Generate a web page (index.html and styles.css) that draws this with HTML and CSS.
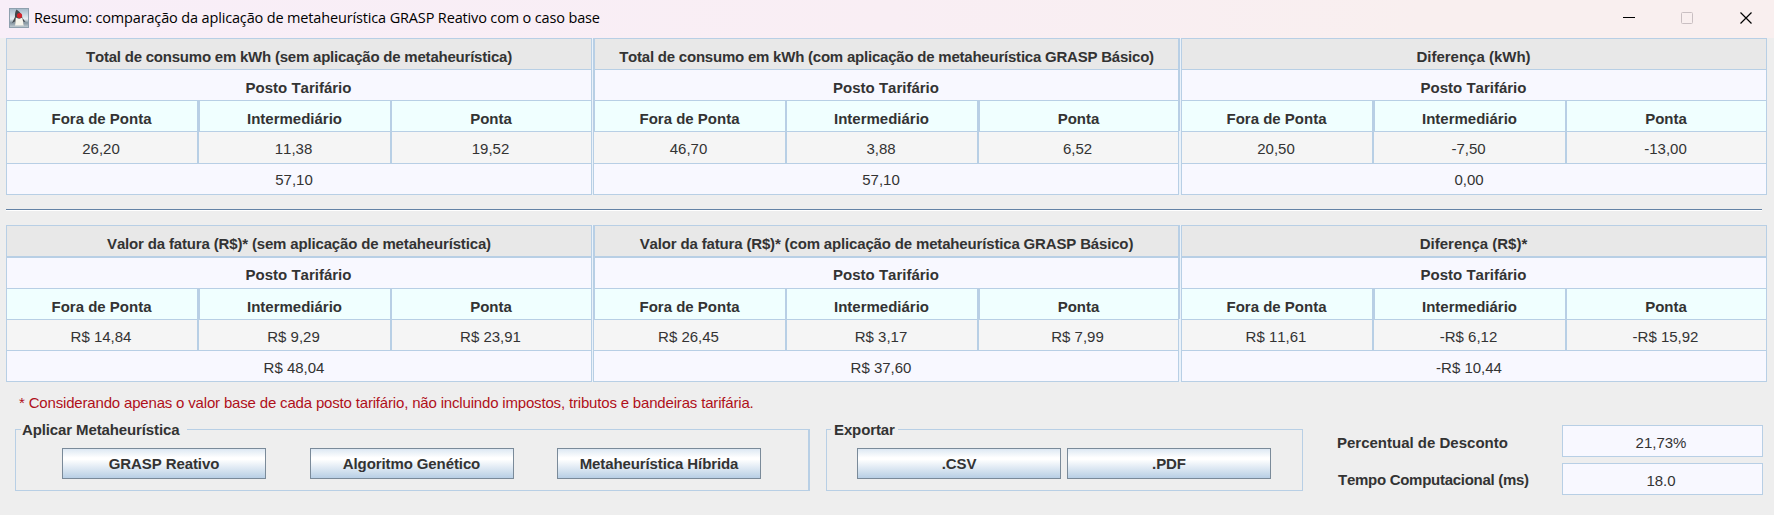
FILE: index.html
```
<!DOCTYPE html>
<html lang="pt-BR">
<head>
<meta charset="utf-8">
<title>Resumo</title>
<link rel="stylesheet" href="styles.css">
</head>
<body>
<header class="titlebar">
  <svg class="app-icon" width="20" height="20" viewBox="0 0 20 20">
    <defs><linearGradient id="sky" x1="0" y1="0" x2="0" y2="1"><stop offset="0" stop-color="#a3b8c8"/><stop offset=".55" stop-color="#e9eff3"/><stop offset=".75" stop-color="#8595a0"/><stop offset="1" stop-color="#c6d0d6"/></linearGradient></defs>
    <rect x=".5" y=".5" width="19" height="19" fill="url(#sky)" stroke="#8fa0ae"/>
    <path d="M7.500 1.500C10 3 13 6 13.500 10L16.500 14L14 13.500L14.500 17H6L6 13.500L3 15L6 9C5.800 6 6.200 3 7.500 1.500Z" fill="#42474c"/>
    <path d="M6.800 9.500C9 11 11.500 11 13.300 9.500L14.800 17.500H6Z" fill="#f7f5ec"/>
    <circle cx="10.500" cy="7.500" r="2.600" fill="#d3222a"/>
  </svg>
  <span class="window-title">Resumo: comparação da aplicação de metaheurística GRASP Reativo com o caso base</span>
  <svg class="controls" width="130" height="14" viewBox="0 0 130 14">
    <path d="M0 6.500H12" stroke="#000" fill="none"/>
    <rect x="58.500" y="1.500" width="11" height="11" rx="1" stroke="#c9bfc2" fill="none"/>
    <path d="M117.500 1.500L128.500 12.500M128.500 1.500L117.500 12.500" stroke="#000" stroke-width="1.200" fill="none"/>
  </svg>
</header>
<main>
  <section class="tables">
    <div class="panel side">
      <div class="cell title tight">Total de consumo em kWh (sem aplicação de metaheurística)</div>
      <div class="cell posto">Posto Tarifário</div>
      <div class="cell head">Fora de Ponta</div><div class="cell head thick">Intermediário</div><div class="cell head mid">Ponta</div>
      <div class="cell value">26,20</div><div class="cell value mid">11,38</div><div class="cell value mid">19,52</div>
      <div class="cell total">57,10</div>
    </div>
    <div class="panel center">
      <div class="cell title tight">Total de consumo em kWh (com aplicação de metaheurística GRASP Básico)</div>
      <div class="cell posto">Posto Tarifário</div>
      <div class="cell head">Fora de Ponta</div><div class="cell head mid">Intermediário</div><div class="cell head thick">Ponta</div>
      <div class="cell value">46,70</div><div class="cell value mid">3,88</div><div class="cell value mid">6,52</div>
      <div class="cell total">57,10</div>
    </div>
    <div class="panel side">
      <div class="cell title">Diferença (kWh)</div>
      <div class="cell posto">Posto Tarifário</div>
      <div class="cell head">Fora de Ponta</div><div class="cell head thick">Intermediário</div><div class="cell head mid">Ponta</div>
      <div class="cell value">20,50</div><div class="cell value mid">-7,50</div><div class="cell value mid">-13,00</div>
      <div class="cell total">0,00</div>
    </div>
  </section>
  <hr class="separator">
  <section class="tables bill">
    <div class="panel side">
      <div class="cell title tight">Valor da fatura (R$)* (sem aplicação de metaheurística)</div>
      <div class="cell posto">Posto Tarifário</div>
      <div class="cell head">Fora de Ponta</div><div class="cell head thick">Intermediário</div><div class="cell head mid">Ponta</div>
      <div class="cell value">R$ 14,84</div><div class="cell value mid">R$ 9,29</div><div class="cell value mid">R$ 23,91</div>
      <div class="cell total">R$ 48,04</div>
    </div>
    <div class="panel center">
      <div class="cell title tight">Valor da fatura (R$)* (com aplicação de metaheurística GRASP Básico)</div>
      <div class="cell posto">Posto Tarifário</div>
      <div class="cell head">Fora de Ponta</div><div class="cell head mid">Intermediário</div><div class="cell head thick">Ponta</div>
      <div class="cell value">R$ 26,45</div><div class="cell value mid">R$ 3,17</div><div class="cell value mid">R$ 7,99</div>
      <div class="cell total">R$ 37,60</div>
    </div>
    <div class="panel side">
      <div class="cell title">Diferença (R$)*</div>
      <div class="cell posto">Posto Tarifário</div>
      <div class="cell head">Fora de Ponta</div><div class="cell head thick">Intermediário</div><div class="cell head mid">Ponta</div>
      <div class="cell value">R$ 11,61</div><div class="cell value mid">-R$ 6,12</div><div class="cell value mid">-R$ 15,92</div>
      <div class="cell total">-R$ 10,44</div>
    </div>
  </section>
  <p class="note">* Considerando apenas o valor base de cada posto tarifário, não incluindo impostos, tributos e bandeiras tarifária.</p>
  <section class="bottom">
    <fieldset class="group apply">
      <legend>Aplicar Metaheurística</legend>
      <button>GRASP Reativo</button><button>Algoritmo Genético</button><button>Metaheurística Híbrida</button>
    </fieldset>
    <fieldset class="group export">
      <legend>Exportar</legend>
      <button>.CSV</button><button>.PDF</button>
    </fieldset>
    <div class="results">
      <span class="label">Percentual de Desconto</span><output>21,73%</output>
      <span class="label time">Tempo Computacional (ms)</span><output>18.0</output>
    </div>
  </section>
</main>
</body>
</html>
```
FILE: styles.css
```
* { box-sizing: border-box; }
body {
  margin: 0;
  width: 1774px;
  height: 515px;
  overflow: hidden;
  background: #eeeeee;
  color: #333333;
  font: 15px/18px "Liberation Sans", Arial, sans-serif;
  font-kerning: none;
}
.titlebar {
  display: flex;
  height: 38px;
  padding-left: 9px;
  background: linear-gradient(90deg, #f8eef8, #f9eef4 50%, #f9efef 80%, #f9efef);
}
.app-icon { margin-top: 8px; }
.window-title {
  margin: 8px 0 0 5px;
  color: #000;
  font: 14.5px/20px "Open Sans", "Noto Sans", sans-serif;
  letter-spacing: -0.15px;
  white-space: nowrap;
}
.controls { margin: 11px 21px 0 auto; }
main { padding-left: 6px; }
.tables {
  display: grid;
  grid-template-columns: 586px 587px 586px;
  column-gap: 1px;
  width: 1761px;
  background: #eaf2fa;
}
.panel {
  display: grid;
  grid-template-rows: 31px 31px 31px 32px 32px;
}
.bill .panel { grid-template-rows: 31px 32px 31px 31px 32px; }
.side { grid-template-columns: 191px 193px 201px; border-right: 1px solid #b8cfe5; }
.center { grid-template-columns: 192px 192px 203px; }
.cell {
  display: flex;
  justify-content: center;
  border-top: 1px solid #b8cfe5;
  border-left: 1px solid #b8cfe5;
  white-space: pre;
}
.title, .posto, .total { grid-column: 1 / -1; }
.title, .posto, .head { padding: 9px 1px 0 0; font-weight: bold; }
.title { background: #e8e8e8; }
.tight { letter-spacing: -0.22px; padding-right: 0; }
.bill .tight { letter-spacing: -0.16px; }
.posto { background: #f8f8ff; }
.bill .posto { border-top-width: 2px; padding-top: 8px; }
.head { background: #f0ffff; }
.value { background: #f5f5f5; padding: 8px 2px 0 0; }
.total { background: #f8f8ff; border-bottom: 1px solid #b8cfe5; padding: 7px 10px 0 0; }
.bill .value, .bill .total { padding-top: 8px; }
.mid { border-left-width: 2px; }
.thick { border-left-width: 3px; }
.center .title, .center .posto, .center .head:nth-child(3) { border-left-width: 2px; }
.center .title, .center .posto, .center .head:nth-child(5) { border-right: 2px solid #b8cfe5; }
.center .value:nth-child(8), .center .total { border-right: 1px solid #b8cfe5; margin-right: 1px; }
.separator {
  height: 2px;
  width: 1756px;
  margin: 14px 0;
  border: 0;
  background: linear-gradient(#6382a5 50%, #fff 50%);
}
.note { margin: 12px 0 0 13px; color: #b0101a; letter-spacing: -0.174px; white-space: nowrap; }
.bottom { display: flex; height: 71px; margin-top: 8px; }
.group {
  display: flex;
  height: 71px;
  margin: 0;
  padding: 10px 0 0;
  border: 1px solid #b8cfe5;
}
.group legend { padding: 1px 1px 0; font-weight: bold; line-height: 18px; height: 18px; letter-spacing: -0.12px; }
.apply { width: 795px; margin-left: 9px; padding-left: 46px; gap: 43.5px; border-right-width: 2px; }
.apply legend { margin-left: -41px; width: 166px; }
.export { width: 477px; margin-left: 16px; padding-left: 30px; gap: 6px; }
.export legend { margin-left: -26px; width: 67px; padding-left: 3px; }
button {
  width: 204px;
  height: 31px;
  padding: 0;
  border: 1px solid #7a8a99;
  border-radius: 0;
  background: linear-gradient(#dde8f3, #ffffff 30%, #ffffff 36%, #b8cfe5);
  color: #333333;
  font: bold 15px/18px "Liberation Sans", Arial, sans-serif;
  font-kerning: none;
  letter-spacing: -0.1px;
}
.results {
  display: grid;
  grid-template-columns: 225px 201px;
  grid-template-rows: 32px 32px;
  row-gap: 6px;
  margin: 5px 0 0 34px;
  height: 70px;
}
.label { font-weight: bold; padding-top: 9px; white-space: nowrap; }
.time { padding: 8px 0 0 1px; letter-spacing: -0.28px; }
.results output {
  border: 1px solid #b8cfe5;
  background: #f8f8ff;
  padding: 8px 3px 0 0;
  text-align: center;
}
```
